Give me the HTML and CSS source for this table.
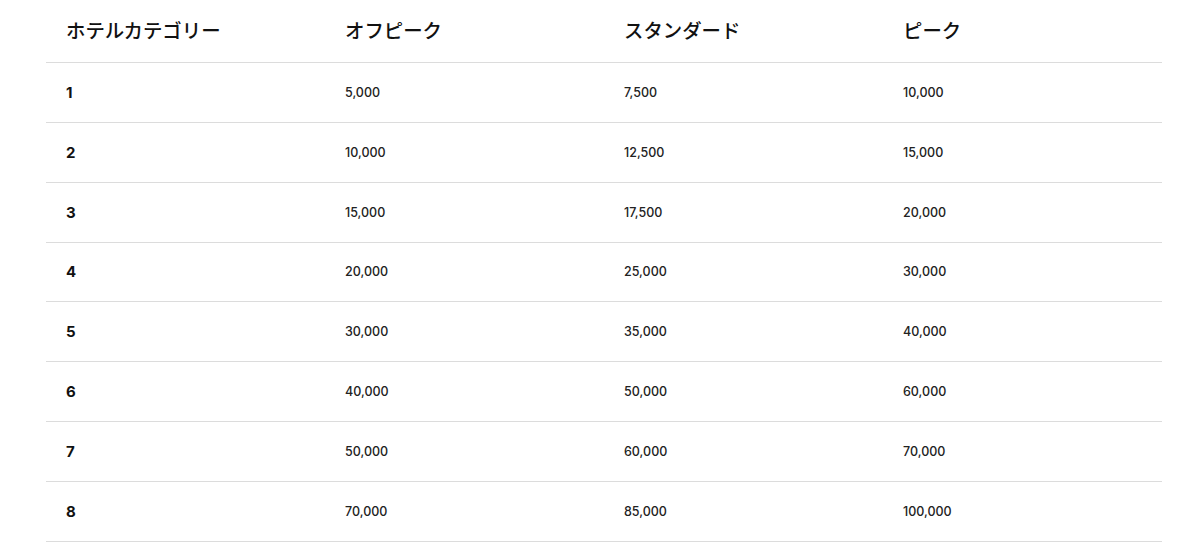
FILE: index.html
```html
<!DOCTYPE html>
<html lang="ja">
<head>
<meta charset="utf-8">
<link rel="stylesheet" href="styles.css">
</head>
<body>
<div class="wrap">
<table class="chart">
<thead>
<tr><th>ホテルカテゴリー</th><th>オフピーク</th><th>スタンダード</th><th>ピーク</th></tr>
</thead>
<tbody>
<tr><td class="cat">1</td><td>5,000</td><td>7,500</td><td>10,000</td></tr>
<tr><td class="cat">2</td><td>10,000</td><td>12,500</td><td>15,000</td></tr>
<tr><td class="cat">3</td><td>15,000</td><td>17,500</td><td>20,000</td></tr>
<tr><td class="cat">4</td><td>20,000</td><td>25,000</td><td>30,000</td></tr>
<tr><td class="cat">5</td><td>30,000</td><td>35,000</td><td>40,000</td></tr>
<tr><td class="cat">6</td><td>40,000</td><td>50,000</td><td>60,000</td></tr>
<tr><td class="cat">7</td><td>50,000</td><td>60,000</td><td>70,000</td></tr>
<tr><td class="cat">8</td><td>70,000</td><td>85,000</td><td>100,000</td></tr>
</tbody>
</table>
</div>
</body>
</html>
```
FILE: styles.css
```css
html, body {
  margin: 0;
  padding: 0;
  background: #fff;
}
.wrap {
  padding: 0 38px 0 46px;
}
.chart {
  width: 1116px;
  border-collapse: collapse;
  table-layout: fixed;
  color: #1a1a1a;
  font-family: "Inter", "Noto Sans CJK JP", sans-serif;
}
.chart th {
  height: 59px;
  padding: 0 0 3px 20px;
  text-align: left;
  font-family: "Noto Sans CJK JP", sans-serif;
  font-size: 19.4px;
  font-weight: 500;
  color: #111;
  border-bottom: 1px solid #dcdcdc;
}
.chart td {
  height: 58.85px;
  padding: 0 0 0 20px;
  font-size: 12.5px;
  font-weight: 500;
  color: #222;
  border-bottom: 1px solid #dcdcdc;
}
.chart td.cat {
  font-size: 15px;
  font-weight: 700;
  color: #111;
}
```
